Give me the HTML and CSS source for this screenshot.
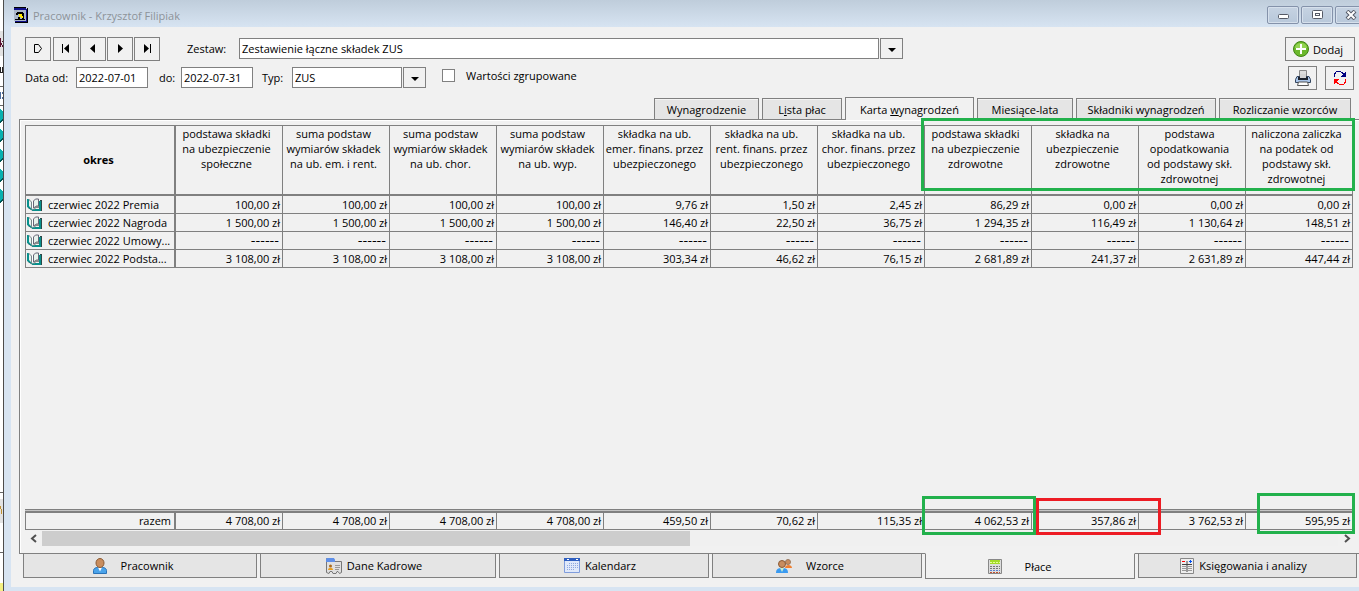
FILE: index.html
```html
<!DOCTYPE html>
<html lang="pl">
<head>
    <meta charset="UTF-8">
    <meta name="viewport" content="width=device-width, initial-scale=1.0">
    <title>Pracownik - Krzysztof Filipiak</title>
    <link rel="stylesheet" href="styles.css">
</head>
<body>
    <div class="behind">
        <svg width="4" height="591" viewBox="0 0 4 591" shape-rendering="crispEdges">
            <rect y="31" width="4" height="25" fill="#e3e3e3"/>
            <path d="M0 38h1v9h-1zM2 41h2v1h-2zM1 43h1v2h-1zM2 45h2v2h-2z" fill="#5a1030"/>
            <path d="M0 67h1v6h-1zM0 72h2v1h-2zM2 67h1v6h-1z" fill="#222"/>
            <path d="M0 86h4v1h-4zM0 105h4v1h-4zM0 492h4v1h-4zM0 552h4v1h-4z" fill="#666"/>
            <path d="M0 92h1v7h-1zM2 92h1v2h-1zM2 97h1v2h-1z" fill="#4a6a9a"/>
            <path d="M0 109l3 3v7l-4 3zM0 129l4 3v6l-4 3zM0 149l4 3v6l-4 3zM0 169l4 3v6l-4 3zM0 189l4 3v6l-4 5z" fill="#08b0b0"/>
            <path d="M0 121l4-3v2l-4 3zM0 140l4-3v2l-4 3zM0 160l4-3v2l-4 3zM0 180l4-3v2l-4 3zM0 201l4-3v2l-4 3z" fill="#055"/>
            <rect y="499" width="4" height="24" fill="#e3e3e3"/>
            <path d="M0 506h1v3h-1zM1 509h1v5h-1zM3 506h1v5h-1z" fill="#c09030"/>
            <rect y="583" width="4" height="8" fill="#f4f080"/>
        </svg>
    </div>
    <div class="window">
        <div class="titlebar">
            <svg class="app-icon" width="15" height="16" viewBox="0 0 15 16" shape-rendering="crispEdges">
                <path fill="#000" d="M0 0h12v1h-12zM13 1h1v15h-13v-1h12z"/>
                <path fill="#aab6c8" d="M0 2h12v12h-12z"/>
                <path fill="#10108a" d="M0 1h12v2h-12zM12 2h1v12h-1zM1 14h12v1h-12z"/>
                <path fill="#000" d="M3 5h6v2h-6zM2 6h2v2h-2zM8 6h2v4h-2zM1 12h10v1h-10zM4 10h2v3h-2zM8 10h2v3h-2z"/>
                <path fill="#ffe800" d="M5 7h3v3h-3zM7 9h2v2h-2z"/>
            </svg>
            <span class="title">Pracownik - Krzysztof Filipiak</span>
            <div class="window-buttons">
                <button aria-label="Minimalizuj"><svg width="12" height="10" viewBox="0 0 12 10"><rect x="1.500" y="4.500" width="10" height="4" rx="1" fill="#fff" stroke="#555a66"/></svg></button>
                <button aria-label="Maksymalizuj"><svg width="12" height="10" viewBox="0 0 12 10"><rect x="1.500" y=".5" width="10" height="8" rx="1" fill="#fff" stroke="#555a66"/><rect x="4.500" y="3.500" width="4" height="2" fill="#fff" stroke="#555a66"/></svg></button>
                <button aria-label="Zamknij"><svg width="12" height="10" viewBox="0 0 12 10"><path d="M2 1l8 8M10 1l-8 8" stroke="#555a66" stroke-width="4"/><path d="M2.500 1.500l7 7M9.500 1.500l-7 7" stroke="#fff" stroke-width="2"/></svg></button>
            </div>
        </div>

        <div class="content">
            <div class="toolbar">
                <div class="filters">
                    <div class="row">
                        <div class="nav">
                            <button aria-label="Wykonaj"><svg width="12" height="12" viewBox="0 0 12 12"><path d="M2.500 1.500h4l3 4-3 4h-4z" fill="none" stroke="#000"/></svg></button>
                            <button aria-label="Pierwszy"><svg width="12" height="12" viewBox="0 0 12 12"><path d="M2 1h1v9h-1zM9 1v9l-5-4.500z"/></svg></button>
                            <button aria-label="Poprzedni"><svg width="12" height="12" viewBox="0 0 12 12"><path d="M8 1v9l-5-4.500z"/></svg></button>
                            <button aria-label="Następny"><svg width="12" height="12" viewBox="0 0 12 12"><path d="M4 1v9l5-4.500z"/></svg></button>
                            <button aria-label="Ostatni"><svg width="12" height="12" viewBox="0 0 12 12"><path d="M9 1h1v9h-1zM3 1v9l5-4.500z"/></svg></button>
                        </div>
                        <label class="set-label" for="zestaw">Zestaw:</label>
                        <span class="combo">
                            <select id="zestaw" class="set"><option>Zestawienie łączne składek ZUS</option></select>
                            <span class="arrow"></span>
                        </span>
                    </div>
                    <div class="row">
                        <label class="from-label" for="od">Data od:</label>
                        <input class="date" type="text" id="od" value="2022-07-01">
                        <label class="to-label" for="do">do:</label>
                        <input class="date" type="text" id="do" value="2022-07-31">
                        <label class="type-label" for="typ">Typ:</label>
                        <span class="combo">
                            <select id="typ" class="type"><option>ZUS</option></select>
                            <span class="arrow"></span>
                        </span>
                        <label class="check"><input type="checkbox"> Wartości zgrupowane</label>
                    </div>
                </div>
                <div class="actions">
                    <button class="add">
                        <svg width="16" height="16" viewBox="0 0 16 16"><circle cx="8" cy="8" r="7.500" fill="#6cb82c" stroke="#3f8414"/><path d="M2 7a6 5 0 0 1 12 0z" fill="#94d452"/><path d="M7 3h2v4h4v2h-4v4h-2v-4h-4v-2h4z" fill="#fff"/></svg>
                        Dodaj
                    </button>
                    <div class="small">
                        <button aria-label="Drukuj"><svg width="16" height="16" viewBox="0 0 16 16"><path d="M4.500.5h7v7h-7z" fill="#ddd" stroke="#888"/><path d="M2 6.500h12l1.500 3v3h-15v-3z" fill="#a9c4e8" stroke="#34465f"/><path d="M3 7h10v3h-10z" fill="#1c222c"/><path d="M5 4h6v4h-6z" fill="#d4d4d4"/><path d="M3.500 12h9l1 3.500h-11z" fill="#fff" stroke="#555"/></svg></button>
                        <button aria-label="Odśwież"><svg width="14" height="16" viewBox="0 0 14 16" shape-rendering="crispEdges"><path d="M1 3h1v4h-1zM2 2h1v2h-1zM3 1h5v1h-5zM8 2h2v1h-2zM9 3h2v1h-2z" fill="#000080"/><path d="M13 2v5h-6z" fill="#000080"/><path d="M12 9h1v4h-1zM11 12h1v2h-1zM6 14h5v1h-5zM4 13h2v1h-2zM3 12h2v1h-2z" fill="#f00"/><path d="M1 14v-5h6z" fill="#f00"/></svg></button>
                    </div>
                </div>
            </div>

            <div class="tabs">
                <button class="t1">Wynagrodzenie</button>
                <button class="t2"><span>L<u>i</u>sta płac</span></button>
                <button class="t3 active"><span>Karta <u>w</u>ynagrodzeń</span></button>
                <button class="t4">Miesiące-lata</button>
                <button class="t5">Składniki wynagrodzeń</button>
                <button class="t6">Rozliczanie wzorców</button>
            </div>

            <div class="panel">
                <table class="grid">
                    <colgroup><col class="period"><col span="11"></colgroup>
                    <thead>
                        <tr>
                            <th class="period">okres</th>
                            <th>podstawa składki<br>na ubezpieczenie<br>społeczne</th>
                            <th>suma podstaw<br>wymiarów składek<br>na ub. em. i rent.</th>
                            <th>suma podstaw<br>wymiarów składek<br>na ub. chor.</th>
                            <th>suma podstaw<br>wymiarów składek<br>na ub. wyp.</th>
                            <th>składka na ub.<br>emer. finans. przez<br>ubezpieczonego</th>
                            <th>składka na ub.<br>rent. finans. przez<br>ubezpieczonego</th>
                            <th>składka na ub.<br>chor. finans. przez<br>ubezpieczonego</th>
                            <th>podstawa składki<br>na ubezpieczenie<br>zdrowotne</th>
                            <th>składka na<br>ubezpieczenie<br>zdrowotne</th>
                            <th>podstawa<br>opodatkowania<br>od podstawy skł.<br>zdrowotnej</th>
                            <th>naliczona zaliczka<br>na podatek od<br>podstawy skł.<br>zdrowotnej</th>
                        </tr>
                    </thead>
                    <tbody>
                        <tr><td><svg class="book" viewBox="0 0 16 14"><use href="#book"/></svg>czerwiec 2022 Premia</td><td>100,00 zł</td><td>100,00 zł</td><td>100,00 zł</td><td>100,00 zł</td><td>9,76 zł</td><td>1,50 zł</td><td>2,45 zł</td><td>86,29 zł</td><td>0,00 zł</td><td>0,00 zł</td><td>0,00 zł</td></tr>
                        <tr><td><svg class="book" viewBox="0 0 16 14"><use href="#book"/></svg>czerwiec 2022 Nagroda</td><td>1 500,00 zł</td><td>1 500,00 zł</td><td>1 500,00 zł</td><td>1 500,00 zł</td><td>146,40 zł</td><td>22,50 zł</td><td>36,75 zł</td><td>1 294,35 zł</td><td>116,49 zł</td><td>1 130,64 zł</td><td>148,51 zł</td></tr>
                        <tr class="empty"><td><svg class="book" viewBox="0 0 16 14"><use href="#book"/></svg>czerwiec 2022 Umowy...</td><td>------</td><td>------</td><td>------</td><td>------</td><td>------</td><td>------</td><td>------</td><td>------</td><td>------</td><td>------</td><td>------</td></tr>
                        <tr><td><svg class="book" viewBox="0 0 16 14"><use href="#book"/></svg>czerwiec 2022 Podsta...</td><td>3 108,00 zł</td><td>3 108,00 zł</td><td>3 108,00 zł</td><td>3 108,00 zł</td><td>303,34 zł</td><td>46,62 zł</td><td>76,15 zł</td><td>2 681,89 zł</td><td>241,37 zł</td><td>2 631,89 zł</td><td>447,44 zł</td></tr>
                    </tbody>
                </table>

                <div class="summary">
                    <div class="splitter"></div>
                    <table class="grid totals">
                        <colgroup><col class="period"><col span="11"></colgroup>
                        <tbody>
                            <tr><td>razem</td><td>4 708,00 zł</td><td>4 708,00 zł</td><td>4 708,00 zł</td><td>4 708,00 zł</td><td>459,50 zł</td><td>70,62 zł</td><td>115,35 zł</td><td>4 062,53 zł</td><td>357,86 zł</td><td>3 762,53 zł</td><td>595,95 zł</td></tr>
                        </tbody>
                    </table>
                    <div class="scrollbar">
                        <button aria-label="W lewo"><svg width="8" height="9" viewBox="0 0 8 9"><path d="M6 1l-4 3.500 4 3.500" fill="none" stroke="#505050" stroke-width="2"/></svg></button>
                        <div class="track"><div class="thumb"></div></div>
                        <button aria-label="W prawo"><svg width="8" height="9" viewBox="0 0 8 9"><path d="M2 1l4 3.500-4 3.500" fill="none" stroke="#505050" stroke-width="2"/></svg></button>
                    </div>
                </div>

                <div class="mark mark-header"></div>
                <div class="mark mark-base"></div>
                <div class="mark mark-health"></div>
                <div class="mark mark-tax"></div>
            </div>

            <div class="sections">
                <button class="spaced"><svg width="14" height="16" viewBox="0 0 14 16"><path d="M.5 15.500v-3c0-2 2-3 4-3h5c2 0 4 1 4 3v3z" fill="#4aa3ea" stroke="#2a73b8"/><path d="M5 9.500h4l-2 4z" fill="#fff"/><ellipse cx="7" cy="5" rx="4" ry="4.500" fill="#c98d5e" stroke="#8a5a34"/></svg>Pracownik</button>
                <button><svg width="16" height="16" viewBox="0 0 16 16"><path d="M.5 14.500v-14h7l1 3h7v11l-2 1-1.500-2h-1l-1 2h-3l-1-2h-2l-1 2z" fill="#e0e0e0" stroke="#777"/><path d="M0 1l1-1h7l1 2v2h-9z" fill="#5f8fe8"/><circle cx="4.500" cy="8" r="1.500" fill="#a86a20"/><path d="M2 12c0-3 5-3 5 0z" fill="#e8a020"/><path d="M9 7.500h5M9 9.500h5M9 11.500h4" stroke="#999"/></svg>Dane Kadrowe</button>
                <button><svg width="16" height="15" viewBox="0 0 16 15"><path d="M.5.500h15v14h-15z" fill="#dfe8fa" stroke="#7f9cdc"/><path d="M0 0h16v3h-16z" fill="#2f5fc0"/><path d="M3 1h2v1h-2zM12 1h2v1h-2z" fill="#fff"/><path d="M5 5.500h9M3 7.500h11M3 9.500h11M3 11.500h8" stroke="#8fa8e0" stroke-dasharray="1 1"/></svg>Kalendarz</button>
                <button class="spaced"><svg width="16" height="14" viewBox="0 0 16 14"><circle cx="12" cy="3" r="2.500" fill="#c98d5e" stroke="#9a7a60"/><path d="M9 9c0-4 7-4 7 0z" fill="#f08030"/><path d="M0 14c0-4 2-5 6-5s6 1 6 5z" fill="#3a9af0"/><path d="M4 9h4l-2 4z" fill="#c8f0d0"/><circle cx="6" cy="5" r="3.500" fill="#c98d5e" stroke="#8a5a34"/></svg>Wzorce</button>
                <button class="active wide"><svg width="14" height="15" viewBox="0 0 14 15"><path d="M.5.500h13v14h-13z" fill="#ddd" stroke="#888"/><path d="M2 1h10v4h-10z" fill="#a5dc28"/><path d="M2 3.500h10" stroke="#e8ff9a" stroke-dasharray="2 1"/><path d="M2 7.500h10M2 9.500h10" stroke="#777" stroke-dasharray="2 1"/><path d="M2 11.500h10" stroke="#5d80cc" stroke-dasharray="2 1"/><path d="M2 13.500h10" stroke="#c05030" stroke-dasharray="2 1"/></svg>Płace</button>
                <button><svg width="14" height="16" viewBox="0 0 14 16"><path d="M.5.500h13v15h-13z" fill="#eee" stroke="#888"/><path d="M2 3.500h3" stroke="#f00"/><path d="M9 3.500h3M10.500 2v3" stroke="#0050f0"/><path d="M2 6.500h10M7 3v11" stroke="#444"/><path d="M2 8.500h4M2 10.500h4M2 12.500h4M8 8.500h4M8 10.500h4M8 12.500h4" stroke="#999"/></svg>Księgowania i analizy</button>
            </div>
        </div>
    </div>

    <svg class="defs" aria-hidden="true">
        <symbol id="book" viewBox="0 0 16 14">
            <path d="M13 2h2v11h-9l-5-3v-1l5 2h7z" fill="#2c4848"/>
            <path d="M0 1h2l1 8 3 2h8v2h-8l-6-4z" fill="#08908c"/>
            <path d="M12 3h2v8h-2z" fill="#08908c"/>
            <path d="M2 1l2 2v7l-2-2z" fill="#e8f0f0"/>
            <path d="M1 1h1l3 3v8l-1-1v-7l-3-3z" fill="#788"/>
            <path d="M5 4l1-2v8l-1 2z" fill="#fff"/>
            <path d="M6.500 10v-7l2-2h3v7h-2z" fill="#e8f2ec" stroke="#667"/>
            <path d="M12 8v2h-3l-2 2h-1l3-4z" fill="#8a8a8a"/>
        </symbol>
    </svg>
</body>
</html>
```
FILE: styles.css
```css
* {
    box-sizing: border-box;
}
body {
    margin: 0;
    display: flex;
    min-height: 100vh;
    overflow: hidden;
    background: #fff;
    color: #000;
    font-family: "Open Sans", "Noto Sans", sans-serif;
    font-size: 11px;
    line-height: 15px;
}
button, input, select {
    font: inherit;
    color: inherit;
    margin: 0;
    border: 1px solid #808080;
    border-radius: 0;
}
button {
    display: flex;
    align-items: center;
    justify-content: center;
    padding: 0;
    background: #f1f1f1;
    white-space: nowrap;
}
svg {
    flex: none;
}
.defs {
    position: absolute;
    width: 0;
    height: 0;
}
.behind {
    flex: none;
    width: 3px;
    overflow: hidden;
}
.behind svg {
    display: block;
}
.window {
    flex: 1;
    min-width: 0;
    display: flex;
    flex-direction: column;
    padding: 0 0 4px 7px;
    border-left: 1px solid #4c4c4c;
    background: #d7e4f2;
}

/* title bar */
.titlebar {
    display: flex;
    align-items: center;
    height: 27px;
    margin-left: -7px;
    padding: 3px 0 0 10px;
    background: linear-gradient(#bfcddb, #d7e4f2);
}
.title {
    margin: 1px 0 0 4px;
    color: #8d9399;
}
.window-buttons {
    display: flex;
    gap: 2px;
    margin-left: auto;
    margin-right: -8px;
}
.window-buttons button {
    width: 32px;
    height: 18px;
    border-color: #8492aa;
    border-radius: 2px;
    background: linear-gradient(#c6d3e2, #b8c8da);
    box-shadow: inset 0 0 0 1px #d6e0ec;
}

.content {
    flex: 1;
    display: flex;
    flex-direction: column;
    padding: 10px 0 8px 8px;
    background: #f1f1f1;
}

/* toolbar */
.toolbar {
    display: flex;
    justify-content: space-between;
    padding: 0 4px 0 6px;
}
.row {
    display: flex;
    align-items: center;
    height: 23px;
    margin-bottom: 6px;
}
.nav {
    display: flex;
    gap: 1px;
}
.nav button {
    width: 26px;
    height: 24px;
}
.nav button:first-child {
    margin-right: 1px;
}
.combo {
    display: flex;
    gap: 1px;
}
select {
    appearance: none;
}
select, .date {
    height: 21px;
    padding: 0 2px 1px;
    background: #fff;
}
.set {
    width: 640px;
}
.type {
    width: 110px;
}
.date {
    width: 72px;
}
.arrow {
    display: flex;
    align-items: center;
    justify-content: center;
    width: 23px;
    border: 1px solid #808080;
}
.arrow::before {
    content: "";
    margin-top: 3px;
    border: 4px solid transparent;
    border-top-color: #000;
    border-bottom: 0;
}
.set-label {
    width: 79px;
    padding-left: 27px;
}
.from-label {
    width: 51px;
}
.to-label {
    width: 33px;
    padding-left: 11px;
}
.type-label {
    width: 39px;
    padding-left: 9px;
}
.check {
    display: flex;
    align-items: center;
    gap: 11px;
    height: 19px;
    margin: 0 0 4px 16px;
}
.check input {
    appearance: none;
    width: 13px;
    height: 13px;
    background: #fff;
}
.actions {
    display: flex;
    flex-direction: column;
    align-items: flex-end;
    gap: 5px;
}
.add {
    width: 70px;
    height: 24px;
    gap: 4px;
    padding-right: 4px;
}
.small {
    display: flex;
    gap: 8px;
    margin-right: 1px;
}
.small button {
    width: 29px;
    height: 24px;
}

/* upper tabs */
.tabs {
    display: flex;
    justify-content: flex-end;
    align-items: flex-end;
    gap: 3px;
    height: 22px;
    margin-top: 2px;
    padding-right: 8px;
}
.tabs button {
    height: 21px;
    border-bottom: 0;
    background: #e5e5e5;
    box-shadow: inset 0 1px #f4f4f4;
}
.tabs .active {
    position: relative;
    z-index: 1;
    height: 23px;
    margin-bottom: -1px;
    background: #f1f1f1;
}
.t1 { width: 105px; }
.t2 { width: 80px; }
.t3 { width: 129px; }
.t4 { width: 96px; }
.t5 { width: 140px; }
.t6 { width: 132px; }

/* payroll card */
.panel {
    position: relative;
    flex: 1;
    display: flex;
    flex-direction: column;
    padding: 5px 4px 7px 5px;
    border: 1px solid #808080;
    border-right: 0;
    box-shadow: inset 1px 1px #fff;
}
.grid {
    width: calc(100% - 2px);
    table-layout: fixed;
    border-collapse: separate;
    border-spacing: 0;
    border-top: 1px solid #808080;
    border-left: 1px solid #808080;
}
.grid col.period {
    width: 150px;
}
.grid th {
    height: 70px;
    padding: 0 5px 0 0;
    border-right: 1px solid #808080;
    border-bottom: 2px solid #808080;
    font-weight: normal;
    vertical-align: top;
    white-space: nowrap;
}
.grid th.period {
    padding: 0 3px 2px 0;
    font-weight: bold;
    vertical-align: middle;
    border-right-width: 2px;
}
.grid td {
    height: 18px;
    padding: 0 2px 0 0;
    border-right: 1px solid #808080;
    border-bottom: 1px solid #808080;
    text-align: right;
    white-space: nowrap;
}
.grid td:first-child {
    padding-left: 1px;
    padding-right: 0;
    border-right-width: 2px;
    text-align: left;
}
.grid .empty td:not(:first-child) {
    padding-right: 3px;
    font-family: "DejaVu Sans", sans-serif;
    font-size: 13px;
}
.book {
    width: 16px;
    height: 14px;
    margin: -2px 5px 0 0;
    vertical-align: middle;
}
.summary {
    margin-top: auto;
}
.splitter {
    height: 2px;
    margin-right: 2px;
    border-top: 1px solid #808080;
    background: #c4c4c4;
}
.totals {
    border-top: 2px solid #808080;
}
.grid.totals td {
    height: 17px;
    padding-bottom: 1px;
}
.grid.totals td:first-child {
    padding-right: 3px;
    text-align: right;
}
.scrollbar {
    display: flex;
    height: 15px;
    margin-top: 1px;
}
.scrollbar button {
    width: 17px;
    border: 0;
}
.track {
    flex: 1;
    background: #f0f0f0;
}
.thumb {
    width: 50%;
    height: 100%;
    background: #cdcdcd;
}

/* frames drawn over the figures */
.mark {
    position: absolute;
    z-index: 2;
    border: 3px solid #22b14c;
}
.mark-header {
    top: -2px;
    right: 4px;
    width: 434px;
    height: 73px;
}
.mark-base {
    right: 323px;
    bottom: 18px;
    width: 114px;
    height: 39px;
}
.mark-health {
    right: 198px;
    bottom: 18px;
    width: 125px;
    height: 37px;
    border-color: #ed1c24;
}
.mark-tax {
    right: 4px;
    bottom: 19px;
    width: 98px;
    height: 41px;
}

/* bottom tabs */
.sections {
    display: grid;
    grid-template-columns: 234fr 236fr 210fr 210fr 210fr 219fr;
    align-items: start;
    gap: 3px;
    margin-top: -1px;
    padding: 0 2px 0 4px;
}
.sections button {
    height: 25px;
    gap: 5px;
    padding-right: 8px;
    background: #e5e5e5;
}
.sections .active {
    position: relative;
    height: 26px;
    border-top-color: #f1f1f1;
    background: #f1f1f1;
}
.sections .spaced {
    gap: 14px;
    padding-right: 14px;
}
.sections .wide {
    gap: 23px;
    padding-right: 21px;
}
```
